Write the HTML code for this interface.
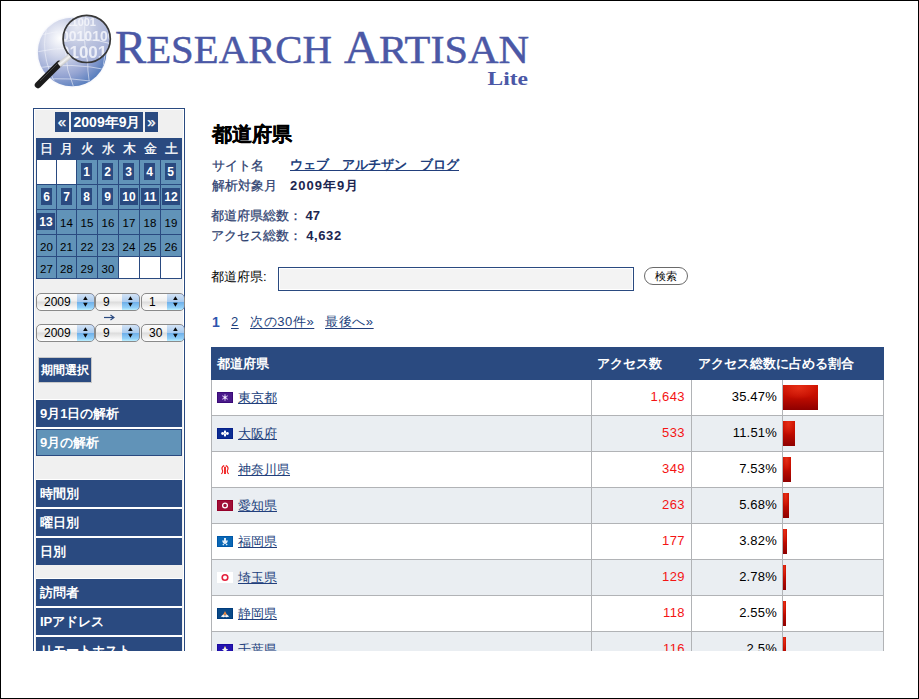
<!DOCTYPE html>
<html lang="ja">
<head>
<meta charset="utf-8">
<style>
html,body{margin:0;padding:0;background:#fff;}
body{width:919px;height:699px;overflow:hidden;position:relative;font-family:"Liberation Sans",sans-serif;}
.frame{position:absolute;left:0;top:0;width:919px;height:699px;box-sizing:border-box;border:1px solid #000;z-index:10;}
.clip{position:absolute;left:0;top:0;width:919px;height:651px;overflow:hidden;}
.a{position:absolute;}
.t{position:absolute;white-space:nowrap;}
.sk{-webkit-text-stroke:0.25px currentColor;}
.sk b{-webkit-text-stroke:0;}
.nb{position:absolute;height:20px;background:#2a4a80;color:#fff;font-weight:bold;font-size:14px;line-height:20px;text-align:center;}
.hd{position:absolute;color:#fff;font-size:13px;line-height:22px;-webkit-text-stroke:0.3px #fff;text-align:center;}
.dc{position:absolute;font-size:11.5px;text-align:center;color:#000;}
.bx{display:inline-block;background:#2a4a80;color:#fff;font-weight:bold;font-size:12px;}
.sel{position:absolute;height:18px;box-sizing:border-box;border:1px solid #8a8a8a;border-radius:5px;background:linear-gradient(#fbfbfb,#f1f1f1 40%,#dddddd 52%,#f2f2f2 80%,#fff);font-size:12px;line-height:16px;overflow:hidden;}
.sel .v{position:absolute;top:0;}
.sel .ar{position:absolute;right:-1px;top:-1px;width:18px;height:18px;border-radius:0 5px 5px 0;border-top:1px solid #3348b0;border-right:1px solid #2d62c0;border-bottom:1px solid #6a8cc0;box-sizing:border-box;background:linear-gradient(#d3e3f5,#a9cbef 48%,#6fb0ea 52%,#92d0f8 85%,#bdf0ff);}
.mi{position:absolute;left:36px;width:146px;height:27px;background:#2a4a80;color:#fff;font-weight:bold;font-size:13px;line-height:27px;padding-left:4px;box-sizing:border-box;}
.lk{color:#223f7c;text-decoration:underline;}
.row{position:absolute;left:211px;width:674px;height:36px;}
</style>
</head>
<body>
<div class="clip">

<svg class="a" style="left:0;top:0" width="560" height="100" viewBox="0 0 560 100">
<defs>
<radialGradient id="halo" cx="0.5" cy="0.5" r="0.5">
<stop offset="0.85" stop-color="#c8cdea" stop-opacity="0.9"/>
<stop offset="1" stop-color="#ffffff" stop-opacity="0"/>
</radialGradient>
<radialGradient id="glb" cx="0.33" cy="0.3" r="0.85">
<stop offset="0" stop-color="#ffffff"/>
<stop offset="0.3" stop-color="#d3d8eb"/>
<stop offset="0.65" stop-color="#95a4d2"/>
<stop offset="1" stop-color="#3d6db4"/>
</radialGradient>
<radialGradient id="lens" cx="0.3" cy="0.25" r="0.9">
<stop offset="0" stop-color="#e4e7f2"/>
<stop offset="0.5" stop-color="#bac2de"/>
<stop offset="1" stop-color="#a0acd6"/>
</radialGradient>
<linearGradient id="col" x1="0" y1="0" x2="1" y2="1">
<stop offset="0" stop-color="#888"/>
<stop offset="0.5" stop-color="#f4f4f4"/>
<stop offset="1" stop-color="#777"/>
</linearGradient>
<filter id="bl" x="-0.2" y="-0.2" width="1.4" height="1.4"><feGaussianBlur stdDeviation="0.75"/></filter>
<clipPath id="lc"><circle cx="86.7" cy="38.9" r="23"/></clipPath>
<clipPath id="gc"><circle cx="72.2" cy="52" r="34"/></clipPath>
</defs>
<circle cx="72.2" cy="52" r="37" fill="url(#halo)"/>
<circle cx="72.2" cy="52" r="34.3" fill="url(#glb)"/>
<g clip-path="url(#gc)" stroke="#f2f4fb" stroke-width="0.7" fill="none" opacity="0.85">
<path d="M36 36 Q72 26 108 36"/>
<path d="M36 52 Q72 44 108 52"/>
<path d="M36 68 Q72 62 108 70"/>
<path d="M40 80 Q72 76 104 84"/>
<path d="M50 18 Q36 52 58 88"/>
<path d="M72 17 Q58 52 74 88"/>
<path d="M92 18 Q84 52 90 88"/>
<path d="M104 30 Q108 52 100 80"/>
</g>
<circle cx="86.7" cy="38.9" r="23.5" fill="url(#lens)"/>
<g clip-path="url(#lc)" filter="url(#bl)" fill="#f6f7fc" font-family="Liberation Sans" font-weight="bold" opacity="0.85">
<text x="66" y="26" font-size="11">11001</text>
<text x="61" y="41" font-size="14">0010100</text>
<text x="60" y="58" font-size="17">010010</text>
</g>
<g clip-path="url(#lc)" stroke="#eef0f8" stroke-width="0.8" fill="none"><path d="M62 42 Q86 36 112 44"/><path d="M86 14 Q82 40 88 64"/></g>
<circle cx="86.7" cy="38.9" r="23.6" fill="none" stroke="#383838" stroke-width="1.7"/>
<line x1="59" y1="64" x2="38" y2="85" stroke="#1c1c1c" stroke-width="6.5" stroke-linecap="round"/>
<line x1="57" y1="64" x2="40" y2="81" stroke="#666" stroke-width="1" opacity="0.6"/>
<line x1="70" y1="56" x2="59" y2="65" stroke="url(#col)" stroke-width="5"/>
<text x="115" y="63.3" font-family="Liberation Serif" fill="#4b58a6" stroke="#4b58a6" stroke-width="0.5" font-size="47" textLength="217" lengthAdjust="spacingAndGlyphs">R<tspan font-size="41">ESEARCH</tspan></text>
<text x="344" y="63.3" font-family="Liberation Serif" fill="#4b58a6" stroke="#4b58a6" stroke-width="0.5" font-size="47" textLength="185" lengthAdjust="spacingAndGlyphs">A<tspan font-size="41">RTISAN</tspan></text>
<text x="487.5" y="84.5" font-family="Liberation Serif" font-weight="bold" fill="#4b58a6" font-size="18.5" textLength="40.5" lengthAdjust="spacingAndGlyphs">Lite</text>
</svg>

<div class="a" style="left:33px;top:108px;width:150px;height:600px;border:1px solid #2a4a80;box-shadow:inset 0 0 0 1px #fff;background:#f0f0f0;padding:0;"></div>
<div class="nb" style="left:55px;top:112px;width:14px;font-weight:normal;font-size:15px;line-height:19px;height:20px;-webkit-text-stroke:0.3px #fff;">&laquo;</div>
<div class="nb" style="left:71px;top:112px;width:72px;">2009年9月</div>
<div class="nb" style="left:145px;top:112px;width:13px;font-weight:normal;font-size:15px;line-height:19px;height:20px;-webkit-text-stroke:0.3px #fff;">&raquo;</div>
<div class="a" style="left:36px;top:138px;width:146px;height:141px;background:#2a4a80;"></div>
<div class="hd" style="left:37px;top:138px;width:19px;">日</div>
<div class="hd" style="left:57px;top:138px;width:19px;">月</div>
<div class="hd" style="left:77px;top:138px;width:20px;">火</div>
<div class="hd" style="left:98px;top:138px;width:20px;">水</div>
<div class="hd" style="left:119px;top:138px;width:20px;">木</div>
<div class="hd" style="left:140px;top:138px;width:20px;">金</div>
<div class="hd" style="left:161px;top:138px;width:20px;">土</div>
<div class="a" style="left:37px;top:160px;width:19px;height:24px;background:#fff;"></div>
<div class="a" style="left:57px;top:160px;width:19px;height:24px;background:#fff;"></div>
<div class="a" style="left:77px;top:160px;width:20px;height:24px;background:#6193b8;"></div>
<div class="a" style="left:81px;top:163px;width:11px;height:16px;padding-top:1px;background:#2a4a80;color:#fff;font-weight:bold;font-size:12px;line-height:17px;text-align:center;">1</div>
<div class="a" style="left:98px;top:160px;width:20px;height:24px;background:#6193b8;"></div>
<div class="a" style="left:102px;top:163px;width:11px;height:16px;padding-top:1px;background:#2a4a80;color:#fff;font-weight:bold;font-size:12px;line-height:17px;text-align:center;">2</div>
<div class="a" style="left:119px;top:160px;width:20px;height:24px;background:#6193b8;"></div>
<div class="a" style="left:123px;top:163px;width:11px;height:16px;padding-top:1px;background:#2a4a80;color:#fff;font-weight:bold;font-size:12px;line-height:17px;text-align:center;">3</div>
<div class="a" style="left:140px;top:160px;width:20px;height:24px;background:#6193b8;"></div>
<div class="a" style="left:144px;top:163px;width:11px;height:16px;padding-top:1px;background:#2a4a80;color:#fff;font-weight:bold;font-size:12px;line-height:17px;text-align:center;">4</div>
<div class="a" style="left:161px;top:160px;width:20px;height:24px;background:#6193b8;"></div>
<div class="a" style="left:165px;top:163px;width:11px;height:16px;padding-top:1px;background:#2a4a80;color:#fff;font-weight:bold;font-size:12px;line-height:17px;text-align:center;">5</div>
<div class="a" style="left:37px;top:185px;width:19px;height:24px;background:#6193b8;"></div>
<div class="a" style="left:41px;top:188px;width:11px;height:16px;padding-top:1px;background:#2a4a80;color:#fff;font-weight:bold;font-size:12px;line-height:17px;text-align:center;">6</div>
<div class="a" style="left:57px;top:185px;width:19px;height:24px;background:#6193b8;"></div>
<div class="a" style="left:61px;top:188px;width:11px;height:16px;padding-top:1px;background:#2a4a80;color:#fff;font-weight:bold;font-size:12px;line-height:17px;text-align:center;">7</div>
<div class="a" style="left:77px;top:185px;width:20px;height:24px;background:#6193b8;"></div>
<div class="a" style="left:81px;top:188px;width:11px;height:16px;padding-top:1px;background:#2a4a80;color:#fff;font-weight:bold;font-size:12px;line-height:17px;text-align:center;">8</div>
<div class="a" style="left:98px;top:185px;width:20px;height:24px;background:#6193b8;"></div>
<div class="a" style="left:102px;top:188px;width:11px;height:16px;padding-top:1px;background:#2a4a80;color:#fff;font-weight:bold;font-size:12px;line-height:17px;text-align:center;">9</div>
<div class="a" style="left:119px;top:185px;width:20px;height:24px;background:#6193b8;"></div>
<div class="a" style="left:120px;top:188px;width:18px;height:16px;padding-top:1px;background:#2a4a80;color:#fff;font-weight:bold;font-size:12px;line-height:17px;text-align:center;">10</div>
<div class="a" style="left:140px;top:185px;width:20px;height:24px;background:#6193b8;"></div>
<div class="a" style="left:141px;top:188px;width:18px;height:16px;padding-top:1px;background:#2a4a80;color:#fff;font-weight:bold;font-size:12px;line-height:17px;text-align:center;">11</div>
<div class="a" style="left:161px;top:185px;width:20px;height:24px;background:#6193b8;"></div>
<div class="a" style="left:162px;top:188px;width:18px;height:16px;padding-top:1px;background:#2a4a80;color:#fff;font-weight:bold;font-size:12px;line-height:17px;text-align:center;">12</div>
<div class="a" style="left:37px;top:210px;width:19px;height:24px;background:#6193b8;"></div>
<div class="a" style="left:37px;top:213px;width:18px;height:16px;padding-top:1px;background:#2a4a80;color:#fff;font-weight:bold;font-size:12px;line-height:17px;text-align:center;">13</div>
<div class="a" style="left:57px;top:210px;width:19px;height:24px;background:#6193b8;"></div>
<div class="dc" style="left:57px;top:211px;width:19px;line-height:24px;">14</div>
<div class="a" style="left:77px;top:210px;width:20px;height:24px;background:#6193b8;"></div>
<div class="dc" style="left:77px;top:211px;width:20px;line-height:24px;">15</div>
<div class="a" style="left:98px;top:210px;width:20px;height:24px;background:#6193b8;"></div>
<div class="dc" style="left:98px;top:211px;width:20px;line-height:24px;">16</div>
<div class="a" style="left:119px;top:210px;width:20px;height:24px;background:#6193b8;"></div>
<div class="dc" style="left:119px;top:211px;width:20px;line-height:24px;">17</div>
<div class="a" style="left:140px;top:210px;width:20px;height:24px;background:#6193b8;"></div>
<div class="dc" style="left:140px;top:211px;width:20px;line-height:24px;">18</div>
<div class="a" style="left:161px;top:210px;width:20px;height:24px;background:#6193b8;"></div>
<div class="dc" style="left:161px;top:211px;width:20px;line-height:24px;">19</div>
<div class="a" style="left:37px;top:235px;width:19px;height:21px;background:#6193b8;"></div>
<div class="dc" style="left:37px;top:237px;width:19px;line-height:21px;">20</div>
<div class="a" style="left:57px;top:235px;width:19px;height:21px;background:#6193b8;"></div>
<div class="dc" style="left:57px;top:237px;width:19px;line-height:21px;">21</div>
<div class="a" style="left:77px;top:235px;width:20px;height:21px;background:#6193b8;"></div>
<div class="dc" style="left:77px;top:237px;width:20px;line-height:21px;">22</div>
<div class="a" style="left:98px;top:235px;width:20px;height:21px;background:#6193b8;"></div>
<div class="dc" style="left:98px;top:237px;width:20px;line-height:21px;">23</div>
<div class="a" style="left:119px;top:235px;width:20px;height:21px;background:#6193b8;"></div>
<div class="dc" style="left:119px;top:237px;width:20px;line-height:21px;">24</div>
<div class="a" style="left:140px;top:235px;width:20px;height:21px;background:#6193b8;"></div>
<div class="dc" style="left:140px;top:237px;width:20px;line-height:21px;">25</div>
<div class="a" style="left:161px;top:235px;width:20px;height:21px;background:#6193b8;"></div>
<div class="dc" style="left:161px;top:237px;width:20px;line-height:21px;">26</div>
<div class="a" style="left:37px;top:257px;width:19px;height:21px;background:#6193b8;"></div>
<div class="dc" style="left:37px;top:259px;width:19px;line-height:21px;">27</div>
<div class="a" style="left:57px;top:257px;width:19px;height:21px;background:#6193b8;"></div>
<div class="dc" style="left:57px;top:259px;width:19px;line-height:21px;">28</div>
<div class="a" style="left:77px;top:257px;width:20px;height:21px;background:#6193b8;"></div>
<div class="dc" style="left:77px;top:259px;width:20px;line-height:21px;">29</div>
<div class="a" style="left:98px;top:257px;width:20px;height:21px;background:#6193b8;"></div>
<div class="dc" style="left:98px;top:259px;width:20px;line-height:21px;">30</div>
<div class="a" style="left:119px;top:257px;width:20px;height:21px;background:#fff;"></div>
<div class="a" style="left:140px;top:257px;width:20px;height:21px;background:#fff;"></div>
<div class="a" style="left:161px;top:257px;width:20px;height:21px;background:#fff;"></div>
<div class="sel" style="left:36px;top:293px;width:59px;"><span class="v" style="left:7px;">2009</span><div class="ar"><svg width="18" height="17" style="position:absolute;left:0;top:0"><path d="M8.4 2.2 L10.7 6 L6.1 6 Z M8.4 12.8 L10.7 8.8 L6.1 8.8 Z" fill="#0a0a0a"/></svg></div></div>
<div class="sel" style="left:95px;top:293px;width:45px;"><span class="v" style="left:7px;">9</span><div class="ar"><svg width="18" height="17" style="position:absolute;left:0;top:0"><path d="M8.4 2.2 L10.7 6 L6.1 6 Z M8.4 12.8 L10.7 8.8 L6.1 8.8 Z" fill="#0a0a0a"/></svg></div></div>
<div class="sel" style="left:141px;top:293px;width:44px;"><span class="v" style="left:7px;">1</span><div class="ar"><svg width="18" height="17" style="position:absolute;left:0;top:0"><path d="M8.4 2.2 L10.7 6 L6.1 6 Z M8.4 12.8 L10.7 8.8 L6.1 8.8 Z" fill="#0a0a0a"/></svg></div></div>
<svg class="a" style="left:100px;top:312px" width="18" height="11"><path d="M4 5.5 L13.5 5.5" stroke="#2a4a80" stroke-width="1.2"/><path d="M10.5 3 L14 5.5 L10.5 8" stroke="#2a4a80" stroke-width="1.1" fill="none"/></svg>
<div class="sel" style="left:36px;top:324px;width:59px;"><span class="v" style="left:7px;">2009</span><div class="ar"><svg width="18" height="17" style="position:absolute;left:0;top:0"><path d="M8.4 2.2 L10.7 6 L6.1 6 Z M8.4 12.8 L10.7 8.8 L6.1 8.8 Z" fill="#0a0a0a"/></svg></div></div>
<div class="sel" style="left:95px;top:324px;width:45px;"><span class="v" style="left:7px;">9</span><div class="ar"><svg width="18" height="17" style="position:absolute;left:0;top:0"><path d="M8.4 2.2 L10.7 6 L6.1 6 Z M8.4 12.8 L10.7 8.8 L6.1 8.8 Z" fill="#0a0a0a"/></svg></div></div>
<div class="sel" style="left:141px;top:324px;width:44px;"><span class="v" style="left:7px;">30</span><div class="ar"><svg width="18" height="17" style="position:absolute;left:0;top:0"><path d="M8.4 2.2 L10.7 6 L6.1 6 Z M8.4 12.8 L10.7 8.8 L6.1 8.8 Z" fill="#0a0a0a"/></svg></div></div>
<div class="a" style="left:38px;top:357px;width:52px;height:24px;border:1px solid #c8c8c8;background:#2a4a80;color:#fff;font-size:12px;line-height:24px;text-align:center;font-weight:bold;">期間選択</div>
<div class="a" style="left:36px;top:399px;width:146px;height:57px;background:#fff;"></div>
<div class="a" style="left:36px;top:479px;width:146px;height:86px;background:#fff;"></div>
<div class="a" style="left:36px;top:578px;width:146px;height:86px;background:#fff;"></div>
<div class="mi" style="top:400px;">9月1日の解析</div>
<div class="mi" style="top:429px;background:#6193b8;border:1px solid #2a4a80;line-height:25px;padding-left:3px;">9月の解析</div>
<div class="mi" style="top:480px;">時間別</div>
<div class="mi" style="top:509px;">曜日別</div>
<div class="mi" style="top:538px;">日別</div>
<div class="mi" style="top:579px;">訪問者</div>
<div class="mi" style="top:608px;">IPアドレス</div>
<div class="mi" style="top:637px;">リモートホスト</div>
<div class="t" style="-webkit-text-stroke:0.35px #000;left:212px;top:122px;font-size:19.5px;line-height:24px;font-weight:bold;color:#000;">都道府県</div>
<div class="t sk" style="left:212px;top:157px;font-size:13px;line-height:18px;color:#2e4170;">サイト名</div>
<div class="t" style="left:290px;top:156px;font-size:13px;line-height:18px;font-weight:bold;"><span class="lk">ウェブ　アルチザン　ブログ</span></div>
<div class="t sk" style="left:212px;top:177px;font-size:13px;line-height:18px;color:#2e4170;">解析対象月</div>
<div class="t" style="left:290px;top:177px;font-size:13px;line-height:18px;font-weight:bold;color:#1c2550;letter-spacing:1px;">2009年9月</div>
<div class="t sk" style="left:211px;top:207px;font-size:13px;line-height:18px;color:#2e4170;">都道府県総数：<b style="color:#1c2550;">&nbsp;47</b></div>
<div class="t sk" style="left:211px;top:227px;font-size:13px;line-height:18px;color:#2e4170;">アクセス総数：<b style="color:#1c2550;letter-spacing:0.6px;">&nbsp;4,632</b></div>
<div class="t" style="left:211px;top:268px;font-size:13px;line-height:18px;color:#000;">都道府県:</div>
<div class="a" style="left:278px;top:267px;width:354px;height:22px;border:1px solid #2a4a80;box-shadow:inset 0 0 0 1px #fff;background:#f3f3f3;"></div>
<div class="a" style="left:644px;top:267px;width:42px;height:16px;border:1px solid #6a6a6a;border-radius:9px;background:linear-gradient(#fdfdfd,#f2f2f2 45%%,#dcdcdc 55%%,#f4f4f4 85%%,#fff);font-size:11px;line-height:17px;text-align:center;color:#000;">検索</div>
<div class="t" style="left:212px;top:313px;font-size:14px;line-height:18px;font-weight:bold;color:#2d55ae;">1</div>
<div class="t" style="left:231px;top:313px;font-size:13px;line-height:18px;letter-spacing:0.5px;"><span class="lk" style="text-underline-offset:1.6px">2</span></div>
<div class="t" style="left:250px;top:313px;font-size:13px;line-height:18px;letter-spacing:0.6px;"><span class="lk" style="text-underline-offset:1.6px">次の30件&raquo;</span></div>
<div class="t" style="left:325px;top:313px;font-size:13px;line-height:18px;letter-spacing:0.6px;"><span class="lk" style="text-underline-offset:1.6px">最後へ&raquo;</span></div>
<div class="a" style="left:211px;top:347px;width:673px;height:33px;background:#2a4a80;"></div>
<div class="t" style="left:217px;top:355px;font-size:13px;line-height:18px;font-weight:bold;color:#fff;">都道府県</div>
<div class="t" style="left:597px;top:355px;font-size:13px;line-height:18px;font-weight:bold;color:#fff;">アクセス数</div>
<div class="t" style="left:698px;top:355px;font-size:13px;line-height:18px;font-weight:bold;color:#fff;">アクセス総数に占める割合</div>
<div class="a" style="left:211px;top:380px;width:673px;height:36px;background:#b1b3b6;"></div>
<div class="a" style="left:212px;top:380px;width:379px;height:35px;background:#fff;"></div>
<div class="a" style="left:592px;top:380px;width:99px;height:35px;background:#fff;"></div>
<div class="a" style="left:692px;top:380px;width:90px;height:35px;background:#fff;"></div>
<div class="a" style="left:783px;top:380px;width:100px;height:35px;background:#fff;"></div>
<svg class="a" style="left:217px;top:392px" width="16" height="11"><rect x="0.5" y="0.5" width="15" height="10" fill="#4a1a8a" stroke="#3a0a78" stroke-width="1"/><g stroke="#cdb6ea" stroke-width="1.1"><path d="M8 2.2 L8 8.8"/><path d="M5.2 3.6 L10.8 7.4"/><path d="M5.2 7.4 L10.8 3.6"/></g><circle cx="8" cy="5.5" r="1.2" fill="#f4eefc"/></svg>
<div class="t" style="left:238px;top:389px;font-size:13px;line-height:18px;"><span class="lk">東京都</span></div>
<div class="t" style="left:592px;width:93px;text-align:right;top:388px;font-size:13px;line-height:18px;letter-spacing:0.4px;color:#f41414;">1,643</div>
<div class="t" style="left:692px;width:85px;text-align:right;top:388px;font-size:13px;line-height:18px;letter-spacing:0.2px;color:#000;">35.47%</div>
<div class="a" style="left:783px;top:385px;width:35px;height:25px;background:radial-gradient(ellipse 55% 45% at 45% 12%,rgba(255,80,50,0.45),rgba(255,80,50,0) 100%),linear-gradient(#d21400,#c40d00 45%,#8e0000);"></div>
<div class="a" style="left:211px;top:416px;width:673px;height:36px;background:#b1b3b6;"></div>
<div class="a" style="left:212px;top:416px;width:379px;height:35px;background:#eaeef2;"></div>
<div class="a" style="left:592px;top:416px;width:99px;height:35px;background:#eaeef2;"></div>
<div class="a" style="left:692px;top:416px;width:90px;height:35px;background:#eaeef2;"></div>
<div class="a" style="left:783px;top:416px;width:100px;height:35px;background:#eaeef2;"></div>
<svg class="a" style="left:217px;top:428px" width="16" height="11"><rect x="0.5" y="0.5" width="15" height="10" fill="#0b2d92" stroke="#06208a" stroke-width="1"/><g fill="#fff"><rect x="7" y="2.6" width="2" height="5.8"/><circle cx="5.6" cy="5.5" r="1.4"/><circle cx="10.4" cy="5.5" r="1.4"/><circle cx="8" cy="5.5" r="1.5"/></g><circle cx="8" cy="5.5" r="0.6" fill="#6a80c8"/></svg>
<div class="t" style="left:238px;top:425px;font-size:13px;line-height:18px;"><span class="lk">大阪府</span></div>
<div class="t" style="left:592px;width:93px;text-align:right;top:424px;font-size:13px;line-height:18px;letter-spacing:0.4px;color:#f41414;">533</div>
<div class="t" style="left:692px;width:85px;text-align:right;top:424px;font-size:13px;line-height:18px;letter-spacing:0.2px;color:#000;">11.51%</div>
<div class="a" style="left:783px;top:421px;width:12px;height:25px;background:radial-gradient(ellipse 55% 45% at 45% 12%,rgba(255,80,50,0.45),rgba(255,80,50,0) 100%),linear-gradient(#d21400,#c40d00 45%,#8e0000);"></div>
<div class="a" style="left:211px;top:452px;width:673px;height:36px;background:#b1b3b6;"></div>
<div class="a" style="left:212px;top:452px;width:379px;height:35px;background:#fff;"></div>
<div class="a" style="left:592px;top:452px;width:99px;height:35px;background:#fff;"></div>
<div class="a" style="left:692px;top:452px;width:90px;height:35px;background:#fff;"></div>
<div class="a" style="left:783px;top:452px;width:100px;height:35px;background:#fff;"></div>
<svg class="a" style="left:217px;top:464px" width="16" height="11"><rect width="16" height="11" fill="#fff"/><g stroke="#f01818" fill="none"><path d="M8 2.8 L8 10" stroke-width="1.8"/><path d="M7.2 1.6 Q4.6 2.8 5 5 Q6 6.6 5.6 8.2 L4.4 10" stroke-width="1.1"/><path d="M8.8 1.6 Q11.4 2.8 11 5 Q10 6.6 10.4 8.2 L11.6 10" stroke-width="1.1"/></g></svg>
<div class="t" style="left:238px;top:461px;font-size:13px;line-height:18px;"><span class="lk">神奈川県</span></div>
<div class="t" style="left:592px;width:93px;text-align:right;top:460px;font-size:13px;line-height:18px;letter-spacing:0.4px;color:#f41414;">349</div>
<div class="t" style="left:692px;width:85px;text-align:right;top:460px;font-size:13px;line-height:18px;letter-spacing:0.2px;color:#000;">7.53%</div>
<div class="a" style="left:783px;top:457px;width:8px;height:25px;background:radial-gradient(ellipse 55% 45% at 45% 12%,rgba(255,80,50,0.45),rgba(255,80,50,0) 100%),linear-gradient(#d21400,#c40d00 45%,#8e0000);"></div>
<div class="a" style="left:211px;top:488px;width:673px;height:36px;background:#b1b3b6;"></div>
<div class="a" style="left:212px;top:488px;width:379px;height:35px;background:#eaeef2;"></div>
<div class="a" style="left:592px;top:488px;width:99px;height:35px;background:#eaeef2;"></div>
<div class="a" style="left:692px;top:488px;width:90px;height:35px;background:#eaeef2;"></div>
<div class="a" style="left:783px;top:488px;width:100px;height:35px;background:#eaeef2;"></div>
<svg class="a" style="left:217px;top:500px" width="16" height="11"><rect x="0.5" y="0.5" width="15" height="10" fill="#a00f36" stroke="#96002a" stroke-width="1"/><circle cx="8" cy="5.5" r="2.4" fill="none" stroke="#fff" stroke-width="1.3"/></svg>
<div class="t" style="left:238px;top:497px;font-size:13px;line-height:18px;"><span class="lk">愛知県</span></div>
<div class="t" style="left:592px;width:93px;text-align:right;top:496px;font-size:13px;line-height:18px;letter-spacing:0.4px;color:#f41414;">263</div>
<div class="t" style="left:692px;width:85px;text-align:right;top:496px;font-size:13px;line-height:18px;letter-spacing:0.2px;color:#000;">5.68%</div>
<div class="a" style="left:783px;top:493px;width:6px;height:25px;background:radial-gradient(ellipse 55% 45% at 45% 12%,rgba(255,80,50,0.45),rgba(255,80,50,0) 100%),linear-gradient(#d21400,#c40d00 45%,#8e0000);"></div>
<div class="a" style="left:211px;top:524px;width:673px;height:36px;background:#b1b3b6;"></div>
<div class="a" style="left:212px;top:524px;width:379px;height:35px;background:#fff;"></div>
<div class="a" style="left:592px;top:524px;width:99px;height:35px;background:#fff;"></div>
<div class="a" style="left:692px;top:524px;width:90px;height:35px;background:#fff;"></div>
<div class="a" style="left:783px;top:524px;width:100px;height:35px;background:#fff;"></div>
<svg class="a" style="left:217px;top:536px" width="16" height="11"><rect x="0.5" y="0.5" width="15" height="10" fill="#0a68b6" stroke="#0058a8" stroke-width="1"/><g fill="#dfeaf6"><rect x="7" y="2" width="2" height="3"/><path d="M5 4.6 L11 4.6 L10 7 L8 8.2 L6 7 Z"/><circle cx="6.3" cy="8.6" r="0.8"/><circle cx="9.7" cy="8.6" r="0.8"/></g></svg>
<div class="t" style="left:238px;top:533px;font-size:13px;line-height:18px;"><span class="lk">福岡県</span></div>
<div class="t" style="left:592px;width:93px;text-align:right;top:532px;font-size:13px;line-height:18px;letter-spacing:0.4px;color:#f41414;">177</div>
<div class="t" style="left:692px;width:85px;text-align:right;top:532px;font-size:13px;line-height:18px;letter-spacing:0.2px;color:#000;">3.82%</div>
<div class="a" style="left:783px;top:529px;width:4px;height:25px;background:radial-gradient(ellipse 55% 45% at 45% 12%,rgba(255,80,50,0.45),rgba(255,80,50,0) 100%),linear-gradient(#d21400,#c40d00 45%,#8e0000);"></div>
<div class="a" style="left:211px;top:560px;width:673px;height:36px;background:#b1b3b6;"></div>
<div class="a" style="left:212px;top:560px;width:379px;height:35px;background:#eaeef2;"></div>
<div class="a" style="left:592px;top:560px;width:99px;height:35px;background:#eaeef2;"></div>
<div class="a" style="left:692px;top:560px;width:90px;height:35px;background:#eaeef2;"></div>
<div class="a" style="left:783px;top:560px;width:100px;height:35px;background:#eaeef2;"></div>
<svg class="a" style="left:217px;top:572px" width="16" height="11"><rect width="16" height="11" fill="#fff"/><circle cx="8" cy="5.5" r="2.8" fill="none" stroke="#e4203c" stroke-width="1.6"/></svg>
<div class="t" style="left:238px;top:569px;font-size:13px;line-height:18px;"><span class="lk">埼玉県</span></div>
<div class="t" style="left:592px;width:93px;text-align:right;top:568px;font-size:13px;line-height:18px;letter-spacing:0.4px;color:#f41414;">129</div>
<div class="t" style="left:692px;width:85px;text-align:right;top:568px;font-size:13px;line-height:18px;letter-spacing:0.2px;color:#000;">2.78%</div>
<div class="a" style="left:783px;top:565px;width:3px;height:25px;background:radial-gradient(ellipse 55% 45% at 45% 12%,rgba(255,80,50,0.45),rgba(255,80,50,0) 100%),linear-gradient(#d21400,#c40d00 45%,#8e0000);"></div>
<div class="a" style="left:211px;top:596px;width:673px;height:36px;background:#b1b3b6;"></div>
<div class="a" style="left:212px;top:596px;width:379px;height:35px;background:#fff;"></div>
<div class="a" style="left:592px;top:596px;width:99px;height:35px;background:#fff;"></div>
<div class="a" style="left:692px;top:596px;width:90px;height:35px;background:#fff;"></div>
<div class="a" style="left:783px;top:596px;width:100px;height:35px;background:#fff;"></div>
<svg class="a" style="left:217px;top:608px" width="16" height="11"><rect x="0.5" y="0.5" width="15" height="10" fill="#0a4a88" stroke="#003c7c" stroke-width="1"/><path d="M3.8 8.4 L7 5.8 L8 8.6 L9 5.8 L12.2 8.4 L9.5 9.2 L8 8.8 L6.5 9.2 Z" fill="#f4f4f4"/><path d="M6 7.2 L8 3 L10 7.2 L8 6.6 Z" fill="#f08a3c"/></svg>
<div class="t" style="left:238px;top:605px;font-size:13px;line-height:18px;"><span class="lk">静岡県</span></div>
<div class="t" style="left:592px;width:93px;text-align:right;top:604px;font-size:13px;line-height:18px;letter-spacing:0.4px;color:#f41414;">118</div>
<div class="t" style="left:692px;width:85px;text-align:right;top:604px;font-size:13px;line-height:18px;letter-spacing:0.2px;color:#000;">2.55%</div>
<div class="a" style="left:783px;top:601px;width:3px;height:25px;background:radial-gradient(ellipse 55% 45% at 45% 12%,rgba(255,80,50,0.45),rgba(255,80,50,0) 100%),linear-gradient(#d21400,#c40d00 45%,#8e0000);"></div>
<div class="a" style="left:211px;top:632px;width:673px;height:36px;background:#b1b3b6;"></div>
<div class="a" style="left:212px;top:632px;width:379px;height:35px;background:#eaeef2;"></div>
<div class="a" style="left:592px;top:632px;width:99px;height:35px;background:#eaeef2;"></div>
<div class="a" style="left:692px;top:632px;width:90px;height:35px;background:#eaeef2;"></div>
<div class="a" style="left:783px;top:632px;width:100px;height:35px;background:#eaeef2;"></div>
<svg class="a" style="left:217px;top:644px" width="16" height="11"><rect x="0.5" y="0.5" width="15" height="10" fill="#2414b0" stroke="#1a0aa0" stroke-width="1"/><path d="M8 2.4 L9.2 4.8 L11.2 5.2 L9.4 6.6 L10 9 L8 7.8 L6 9 L6.6 6.6 L4.8 5.2 L6.8 4.8 Z" fill="#f4f4f4"/><circle cx="8" cy="3.2" r="0.8" fill="#f0e060"/></svg>
<div class="t" style="left:238px;top:641px;font-size:13px;line-height:18px;"><span class="lk">千葉県</span></div>
<div class="t" style="left:592px;width:93px;text-align:right;top:640px;font-size:13px;line-height:18px;letter-spacing:0.4px;color:#f41414;">116</div>
<div class="t" style="left:692px;width:85px;text-align:right;top:640px;font-size:13px;line-height:18px;letter-spacing:0.2px;color:#000;">2.5%</div>
<div class="a" style="left:783px;top:637px;width:3px;height:25px;background:radial-gradient(ellipse 55% 45% at 45% 12%,rgba(255,80,50,0.45),rgba(255,80,50,0) 100%),linear-gradient(#d21400,#c40d00 45%,#8e0000);"></div>
</div>
<div class="frame"></div>
</body>
</html>
